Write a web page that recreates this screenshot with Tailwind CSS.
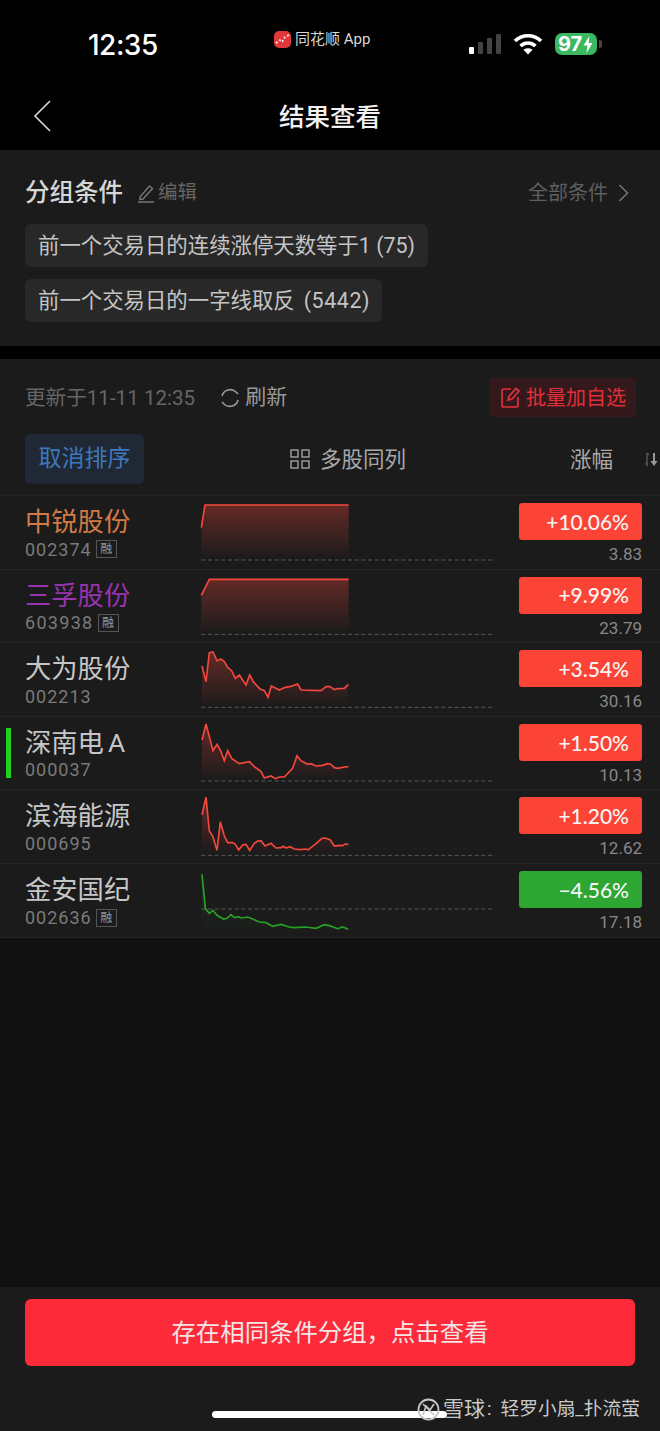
<!doctype html>
<html>
  <head>
    <meta charset="UTF-8" />
    <meta name="viewport" content="width=device-width, initial-scale=1.0" />
    <script src="https://cdn.jsdelivr.net/npm/@tailwindcss/browser@4"></script>
  </head>
  <body class="bg-[#111111]">
    <div class="relative w-[660px] h-[1431px] overflow-hidden flex flex-col bg-[#111111] font-['Roboto','Noto_Sans_CJK_SC',sans-serif]">

      <!-- status bar -->
      <div class="relative h-[88px] bg-black shrink-0">
        <span class="absolute left-[88px] top-[28px] text-[28px] leading-[34px] font-medium text-white font-['Inter',sans-serif] tracking-[-0.5px]">12:35</span>
        <div class="absolute left-[274px] top-[29px] flex items-center gap-[4px]">
          <svg class="w-[17px] h-[17px]" viewBox="0 0 17 17">
            <rect width="17" height="17" rx="5" fill="#e0383a" />
            <path d="M2 12 L6 9 L8 11 L11 6 L15 4" fill="none" stroke="#fff" stroke-width="1.6" stroke-dasharray="2 2" />
          </svg>
          <span class="text-[15px] leading-[20px] text-[#d8d8d8]">同花顺 App</span>
        </div>
        <svg class="absolute left-[468px] top-[33px] w-[36px] h-[22px]" viewBox="0 0 36 22">
          <rect x="1" y="14" width="5" height="7" rx="1" fill="#fff" />
          <rect x="10" y="9" width="5" height="12" rx="1" fill="#444" />
          <rect x="19" y="5" width="5" height="16" rx="1" fill="#444" />
          <rect x="28" y="1" width="5" height="20" rx="1" fill="#444" />
        </svg>
        <svg class="absolute left-[513px] top-[33px] w-[30px] h-[22px]" viewBox="0 0 30 22">
          <path d="M2 8 C9 1 21 1 28 8" fill="none" stroke="#fff" stroke-width="3.6" />
          <path d="M7.5 13 C12 9 18 9 22.5 13" fill="none" stroke="#fff" stroke-width="3.6" />
          <path d="M15 21.5 L10.5 16.8 C13 14.8 17 14.8 19.5 16.8 Z" fill="#fff" />
        </svg>
        <div class="absolute left-[555px] top-[33px] w-[42px] h-[22px] rounded-[7px] bg-[#3bb860] flex items-center pl-[3px] gap-[1px]">
          <span class="text-[20px] leading-[22px] font-bold text-white font-['Inter',sans-serif]">97</span>
          <svg class="w-[10px] h-[17px]" viewBox="0 0 10 17"><path d="M6.5 0 L0.5 9.5 H4.5 L3.5 17 L9.5 7 H5.5 Z" fill="#fff" /></svg>
        </div>
        <div class="absolute left-[599px] top-[40px] w-[3px] h-[8px] rounded-r-[2px] bg-[#444]"></div>
      </div>

      <!-- nav bar -->
      <div class="relative h-[62px] bg-black shrink-0 flex items-center justify-center">
        <svg class="absolute left-[32px] top-[11px] w-[20px] h-[34px]" viewBox="0 0 20 34">
          <path d="M18 2 L3 17 L18 32" fill="none" stroke="#d0d0d0" stroke-width="1.7" />
        </svg>
        <span class="text-[25.5px] leading-[32px] font-medium text-[#f2f2f2] relative top-[-2px]">结果查看</span>
      </div>

      <!-- group conditions -->
      <section class="h-[196px] bg-[#1b1b1b] shrink-0 px-[25px] pt-[28px]">
        <div class="flex items-center h-[30px]">
          <span class="text-[24.5px] leading-[30px] font-medium text-[#d6d6d6]">分组条件</span>
          <svg class="ml-[14px] w-[18px] h-[20px]" viewBox="0 0 18 20">
            <path d="M3 14 L12.5 3 L15.5 5.5 L6 16 L2.8 16.5 Z M1 19 H17" fill="none" stroke="#777" stroke-width="1.4" />
          </svg>
          <span class="ml-[3px] text-[19.5px] leading-[30px] text-[#666]">编辑</span>
          <span class="ml-auto text-[20px] leading-[30px] text-[#5f5f5f]">全部条件</span>
          <svg class="ml-[10px] mr-[6px] w-[11px] h-[18px]" viewBox="0 0 11 18">
            <path d="M1.5 1 L9.5 9 L1.5 17" fill="none" stroke="#777" stroke-width="1.5" />
          </svg>
        </div>
        <div class="mt-[16px] flex flex-col items-start gap-[12px]">
          <div class="h-[43px] w-[403px] pl-[13px] rounded-[6px] bg-[#282828] flex items-center text-[21.4px] pt-[1px] text-[#c4c4c4]">前一个交易日的连续涨停天数等于1 (75)</div>
          <div class="h-[43px] w-[357px] pl-[13px] rounded-[6px] bg-[#282828] flex items-center text-[21.4px] pt-[1px] text-[#c4c4c4]">前一个交易日的一字线取反<span class="ml-[9px] tracking-[0.6px]">(5442)</span></div>
        </div>
      </section>

      <div class="h-[13px] bg-black shrink-0"></div>

      <!-- toolbar -->
      <section class="bg-[#1b1b1b] shrink-0">
        <div class="h-[75px] pl-[25px] pr-[24px] pt-[19px] flex items-start">
          <div class="flex items-center h-[39px] pt-[1px]">
            <span class="text-[20.6px] text-[#666]">更新于11-11 12:35</span>
            <svg class="ml-[25px] w-[20px] h-[20px]" viewBox="0 0 20 20">
              <path d="M2 8 A8.4 8.4 0 0 1 16 4 L18 6 M18 12 A8.4 8.4 0 0 1 4 16 L2 14" fill="none" stroke="#999" stroke-width="1.6" />
            </svg>
            <span class="ml-[5px] text-[21px] text-[#999]">刷新</span>
          </div>
          <div class="ml-auto w-[146px] h-[39px] rounded-[3px] bg-[#34191c] flex items-center pl-[11px] gap-[6px]">
            <svg class="w-[19px] h-[21px]" viewBox="0 0 19 21">
              <path d="M10 2 H3 A2 2 0 0 0 1 4 V18 A2 2 0 0 0 3 20 H15 A2 2 0 0 0 17 18 V10 M7 13 L8 9.5 L15 1.5 L18 4 L11 12 Z" fill="none" stroke="#e0303c" stroke-width="1.7" />
            </svg>
            <span class="text-[20px] whitespace-nowrap text-[#e0303c]">批量加自选</span>
          </div>
        </div>

        <div class="relative h-[61px] pl-[25px] flex items-start">
          <div class="w-[119px] h-[50px] rounded-[5px] bg-[#1f2834] flex items-center justify-center pt-[1px] text-[23px] text-[#3e78bc]">取消排序</div>
          <svg class="ml-[146px] mt-[15px] w-[20px] h-[20px]" viewBox="0 0 20 20">
            <path d="M1 1 H8 V8 H1 Z M12 1 H19 V8 H12 Z M1 12 H8 V19 H1 Z M12 12 H19 V19 H12 Z" fill="none" stroke="#999" stroke-width="1.5" />
          </svg>
          <span class="ml-[10px] mt-[10px] text-[21.5px] leading-[32px] text-[#a8a8a8]">多股同列</span>
          <span class="ml-[164px] mt-[10px] text-[21.5px] leading-[32px] text-[#a8a8a8]">涨幅</span>
          <svg class="absolute left-[645px] top-[18px] w-[13px] h-[15px]" viewBox="0 0 13 15">
            <path d="M2 1 V13 L0.5 11 M2 1 L4 3" fill="none" stroke="#555" stroke-width="1.5" />
            <path d="M9 1 V10" stroke="#999" stroke-width="2" />
            <path d="M5.5 9 H12.5 L9 14 Z" fill="#999" />
          </svg>
        </div>
      </section>

      <!-- stock rows -->
      <section class="bg-[#1b1b1b] shrink-0 border-t border-[#232323]">

        <div class="h-[73.6px] pl-[25px] flex border-b border-[#242424]">
          <div class="w-[166px] shrink-0 pt-[9px]">
            <div class="text-[26.3px] leading-[35px] text-[#d17a45]">中锐股份</div>
            <div class="flex items-center h-[22px] mt-[-2px]">
              <span class="text-[18px] tracking-[1px] text-[#7a7a7a]">002374</span>
              <span class="ml-[4px] w-[21px] h-[18px] border border-[#555] text-[12px] leading-[16px] text-center text-[#999]">融</span>
            </div>
          </div>
          <svg class="w-[328px] h-[74px] shrink-0" viewBox="0 0 984 222">
            <defs>
              <linearGradient id="fade-red" x1="0" y1="0" x2="0" y2="1">
                <stop offset="0" stop-color="#ff4a3d" stop-opacity="0.32" />
                <stop offset="1" stop-color="#ff4a3d" stop-opacity="0" />
              </linearGradient>
              <linearGradient id="fade-green" x1="0" y1="0" x2="0" y2="1">
                <stop offset="0" stop-color="#2da52d" stop-opacity="0.14" />
                <stop offset="1" stop-color="#2da52d" stop-opacity="0" />
              </linearGradient>
            </defs>
            <polygon points="31,95 42,27 473,27 473,190 31,190" fill="url(#fade-red)" />
            <polyline points="31,95 42,27 473,27" fill="none" stroke="#f2473c" stroke-width="5" />
            <line x1="31" y1="192" x2="912" y2="192" stroke="#777" stroke-width="2" stroke-dasharray="12 8" />
          </svg>
          <div class="w-[123px] shrink-0 pt-[7px]">
            <div class="h-[37px] rounded-[3px] bg-[#fb4435] flex items-center justify-end pr-[13px] text-[21px] font-medium font-['Lato',sans-serif] text-[#f5f5f5]">+10.06%</div>
            <div class="text-right text-[17px] leading-[20px] mt-[4px] text-[#888]">3.83</div>
          </div>
        </div>

        <div class="h-[73.6px] pl-[25px] flex border-b border-[#242424]">
          <div class="w-[166px] shrink-0 pt-[9px]">
            <div class="text-[26.3px] leading-[35px] text-[#9a33b0]">三孚股份</div>
            <div class="flex items-center h-[22px] mt-[-2px]">
              <span class="text-[18px] tracking-[1.3px] text-[#7a7a7a]">603938</span>
              <span class="ml-[4px] w-[21px] h-[18px] border border-[#555] text-[12px] leading-[16px] text-center text-[#999]">融</span>
            </div>
          </div>
          <svg class="w-[328px] h-[74px] shrink-0" viewBox="0 0 984 222">
            <polygon points="31,76 55,28 473,28 473,190 31,190" fill="url(#fade-red)" />
            <polyline points="31,76 55,28 473,28" fill="none" stroke="#f2473c" stroke-width="5" />
            <line x1="31" y1="193" x2="912" y2="193" stroke="#777" stroke-width="2" stroke-dasharray="12 8" />
          </svg>
          <div class="w-[123px] shrink-0 pt-[7px]">
            <div class="h-[37px] rounded-[3px] bg-[#fb4435] flex items-center justify-end pr-[13px] text-[21px] font-medium font-['Lato',sans-serif] text-[#f5f5f5]">+9.99%</div>
            <div class="text-right text-[17px] leading-[20px] mt-[4px] text-[#888]">23.79</div>
          </div>
        </div>

        <div class="h-[73.6px] pl-[25px] flex border-b border-[#242424]">
          <div class="w-[166px] shrink-0 pt-[9px]">
            <div class="text-[26.3px] leading-[35px] text-[#c6c6c6]">大为股份</div>
            <div class="flex items-center h-[22px] mt-[-2px]">
              <span class="text-[18px] tracking-[1px] text-[#7a7a7a]">002213</span>
            </div>
          </div>
          <svg class="w-[328px] h-[74px] shrink-0" viewBox="0 9 984 222">
            <polygon points="33,78 45,125 55,38 66,36 78,62 90,57 100,65 110,82 122,92 133,115 145,105 165,135 176,105 187,125 207,147 220,152 231,172 241,138 265,150 283,142 300,139 320,132 330,150 390,152 405,140 417,140 430,149 440,146 460,145 472,133 472,200 33,200" fill="url(#fade-red)" />
            <polyline points="33,78 45,125 55,38 66,36 78,62 90,57 100,65 110,82 122,92 133,115 145,105 165,135 176,105 187,125 207,147 220,152 231,172 241,138 265,150 283,142 300,139 320,132 330,150 390,152 405,140 417,140 430,149 440,146 460,145 472,133" fill="none" stroke="#f2473c" stroke-width="5" />
            <line x1="31" y1="202" x2="912" y2="202" stroke="#777" stroke-width="2" stroke-dasharray="12 8" />
          </svg>
          <div class="w-[123px] shrink-0 pt-[7px]">
            <div class="h-[37px] rounded-[3px] bg-[#fb4435] flex items-center justify-end pr-[13px] text-[21px] font-medium font-['Lato',sans-serif] text-[#f5f5f5]">+3.54%</div>
            <div class="text-right text-[17px] leading-[20px] mt-[4px] text-[#888]">30.16</div>
          </div>
        </div>

        <div class="relative h-[73.6px] pl-[25px] flex border-b border-[#242424]">
          <div class="absolute left-[6px] top-[11px] w-[5px] h-[50px] bg-[#1ed21e]"></div>
          <div class="w-[166px] shrink-0 pt-[9px]">
            <div class="text-[26.3px] leading-[35px] text-[#c6c6c6]">深南电<span class="ml-[4px]">A</span></div>
            <div class="flex items-center h-[22px] mt-[-2px]">
              <span class="text-[18px] tracking-[1px] text-[#7a7a7a]">000037</span>
            </div>
          </div>
          <svg class="w-[328px] h-[74px] shrink-0" viewBox="0 231 984 222">
            <polygon points="33,300 45,252 55,290 66,332 78,313 88,330 100,362 110,332 122,355 145,371 175,365 190,380 210,395 220,414 240,408 253,416 265,411 280,411 305,385 318,347 330,362 350,373 360,371 375,378 395,376 410,371 418,372 430,383 440,385 460,381 472,380 472,421 33,421" fill="url(#fade-red)" />
            <polyline points="33,300 45,252 55,290 66,332 78,313 88,330 100,362 110,332 122,355 145,371 175,365 190,380 210,395 220,414 240,408 253,416 265,411 280,411 305,385 318,347 330,362 350,373 360,371 375,378 395,376 410,371 418,372 430,383 440,385 460,381 472,380" fill="none" stroke="#f2473c" stroke-width="5" />
            <line x1="31" y1="423" x2="912" y2="423" stroke="#777" stroke-width="2" stroke-dasharray="12 8" />
          </svg>
          <div class="w-[123px] shrink-0 pt-[7px]">
            <div class="h-[37px] rounded-[3px] bg-[#fb4435] flex items-center justify-end pr-[13px] text-[21px] font-medium font-['Lato',sans-serif] text-[#f5f5f5]">+1.50%</div>
            <div class="text-right text-[17px] leading-[20px] mt-[4px] text-[#888]">10.13</div>
          </div>
        </div>

        <div class="h-[73.6px] pl-[25px] flex border-b border-[#242424]">
          <div class="w-[166px] shrink-0 pt-[9px]">
            <div class="text-[26.3px] leading-[35px] text-[#c6c6c6]">滨海能源</div>
            <div class="flex items-center h-[22px] mt-[-2px]">
              <span class="text-[18px] tracking-[1px] text-[#7a7a7a]">000695</span>
            </div>
          </div>
          <svg class="w-[328px] h-[74px] shrink-0" viewBox="0 -3 984 222">
            <polygon points="33,72 45,18 55,120 65,135 78,178 88,92 100,135 110,155 125,155 133,160 143,177 155,162 165,160 176,178 190,157 200,150 210,149 222,165 240,157 255,171 270,170 277,166 285,171 297,167 310,174 330,176 340,174 352,176 375,158 393,142 403,141 418,147 430,165 445,163 455,164 462,159 472,160 472,191 33,191" fill="url(#fade-red)" />
            <polyline points="33,72 45,18 55,120 65,135 78,178 88,92 100,135 110,155 125,155 133,160 143,177 155,162 165,160 176,178 190,157 200,150 210,149 222,165 240,157 255,171 270,170 277,166 285,171 297,167 310,174 330,176 340,174 352,176 375,158 393,142 403,141 418,147 430,165 445,163 455,164 462,159 472,160" fill="none" stroke="#f2473c" stroke-width="5" />
            <line x1="31" y1="193" x2="912" y2="193" stroke="#777" stroke-width="2" stroke-dasharray="12 8" />
          </svg>
          <div class="w-[123px] shrink-0 pt-[7px]">
            <div class="h-[37px] rounded-[3px] bg-[#fb4435] flex items-center justify-end pr-[13px] text-[21px] font-medium font-['Lato',sans-serif] text-[#f5f5f5]">+1.20%</div>
            <div class="text-right text-[17px] leading-[20px] mt-[4px] text-[#888]">12.62</div>
          </div>
        </div>

        <div class="h-[73.6px] pl-[25px] flex border-b border-[#242424]">
          <div class="w-[166px] shrink-0 pt-[9px]">
            <div class="text-[26.3px] leading-[35px] text-[#c6c6c6]">金安国纪</div>
            <div class="flex items-center h-[22px] mt-[-1px]">
              <span class="text-[18px] tracking-[1px] text-[#7a7a7a]">002636</span>
              <span class="ml-[4px] w-[21px] h-[18px] border border-[#555] text-[12px] leading-[16px] text-center text-[#999]">融</span>
            </div>
          </div>
          <svg class="w-[328px] h-[74px] shrink-0" viewBox="0 219 984 222">
            <polygon points="33,250 43,352 55,367 66,358 78,373 98,384 108,382 120,371 130,380 142,377 152,381 170,378 190,386 205,393 225,395 245,406 270,400 295,408 310,410 345,408 375,412 400,401 415,404 440,413 455,408 472,415 472,430 33,430" fill="url(#fade-green)" />
            <polyline points="33,250 43,352 55,367 66,358 78,373 98,384 108,382 120,371 130,380 142,377 152,381 170,378 190,386 205,393 225,395 245,406 270,400 295,408 310,410 345,408 375,412 400,401 415,404 440,413 455,408 472,415" fill="none" stroke="#28a028" stroke-width="5" />
            <line x1="31" y1="354" x2="912" y2="354" stroke="#777" stroke-width="2" stroke-dasharray="12 8" />
          </svg>
          <div class="w-[123px] shrink-0 pt-[7px]">
            <div class="h-[37px] rounded-[3px] bg-[#2ea632] flex items-center justify-end pr-[13px] text-[21px] font-medium font-['Lato',sans-serif] text-[#f5f5f5]">−4.56%</div>
            <div class="text-right text-[17px] leading-[20px] mt-[4px] text-[#888]">17.18</div>
          </div>
        </div>
      </section>

      <div class="flex-1"></div>

      <!-- bottom action -->
      <footer class="relative h-[144px] shrink-0 bg-[#1b1b1b] px-[25px] pt-[12px]">
        <div class="h-[67px] rounded-[6px] bg-[#fd2a3a] flex items-center justify-center pt-[2px] text-[24.4px] text-[#f3e6e6]">存在相同条件分组，点击查看</div>
        <div class="absolute left-[212px] top-[124px] w-[235px] h-[7px] rounded-full bg-white"></div>
        <div class="absolute left-[417px] top-[110px] flex items-center">
          <svg class="w-[23px] h-[23px]" viewBox="0 0 23 23">
            <circle cx="11.5" cy="11.5" r="10" fill="none" stroke="#c8c8c8" stroke-width="1.8" />
            <path d="M6 6 L17 17 M17 6 L13 12 L9 8 L6 17" fill="none" stroke="#c8c8c8" stroke-width="1.6" />
          </svg>
          <span class="ml-[3px] text-[21px] leading-[24px] text-[#c8c8c8] whitespace-nowrap">雪球</span>
          <span class="ml-[2px] text-[19px] leading-[24px] text-[#c8c8c8]">:</span>
          <span class="ml-[9px] text-[18.7px] leading-[24px] text-[#c8c8c8] whitespace-nowrap">轻罗小扇_扑流萤</span>
        </div>
      </footer>
    </div>
  </body>
</html>
